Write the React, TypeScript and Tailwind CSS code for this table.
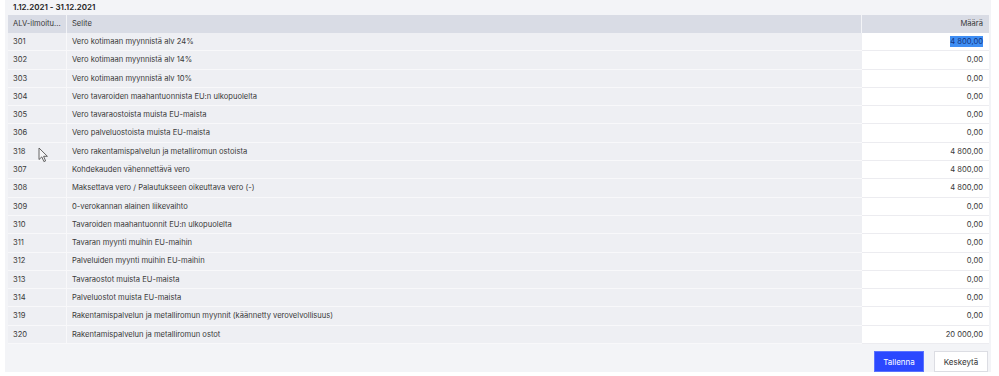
import { useEffect, useRef } from "react";

const rows: [string, string, string][] = [
  ["301", "Vero kotimaan myynnistä alv 24%", "4 800,00"],
  ["302", "Vero kotimaan myynnistä alv 14%", "0,00"],
  ["303", "Vero kotimaan myynnistä alv 10%", "0,00"],
  ["304", "Vero tavaroiden maahantuonnista EU:n ulkopuolelta", "0,00"],
  ["305", "Vero tavaraostoista muista EU-maista", "0,00"],
  ["306", "Vero palveluostoista muista EU-maista", "0,00"],
  ["318", "Vero rakentamispalvelun ja metalliromun ostoista", "4 800,00"],
  ["307", "Kohdekauden vähennettävä vero", "4 800,00"],
  ["308", "Maksettava vero / Palautukseen oikeuttava vero (-)", "4 800,00"],
  ["309", "0-verokannan alainen liikevaihto", "0,00"],
  ["310", "Tavaroiden maahantuonnit EU:n ulkopuolelta", "0,00"],
  ["311", "Tavaran myynti muihin EU-maihin", "0,00"],
  ["312", "Palveluiden myynti muihin EU-maihin", "0,00"],
  ["313", "Tavaraostot muista EU-maista", "0,00"],
  ["314", "Palveluostot muista EU-maista", "0,00"],
  ["319", "Rakentamispalvelun ja metalliromun myynnit (käännetty verovelvollisuus)", "0,00"],
  ["320", "Rakentamispalvelun ja metalliromun ostot", "20 000,00"],
];

function Cursor() {
  return (
    <svg className="absolute left-[38px] top-[147px]" width="12" height="16" viewBox="0 0 12 16">
      <path
        d="M1 1 L1 12.5 L3.8 9.9 L5.9 14.6 L7.6 13.9 L5.6 9.3 L9.4 9.3 Z"
        fill="#f4f4f6"
        stroke="#555"
        strokeWidth="0.9"
        strokeLinejoin="round"
      />
    </svg>
  );
}

export default function App() {
  const selRef = useRef<HTMLSpanElement>(null);

  useEffect(() => {
    // keep first amount "selected" as in the screenshot
    const el = selRef.current;
    if (!el) return;
    const range = document.createRange();
    range.selectNodeContents(el);
    const sel = window.getSelection();
    sel?.removeAllRanges();
    sel?.addRange(range);
  }, []);

  return (
    <div
      className="w-[999px] h-[376px] bg-white text-[#3a3a3a] relative"
      style={{ fontFamily: "Inter, 'Noto Sans', sans-serif" }}
    >
      <div className="ml-[5px] w-[986px] h-[372px] bg-[#f3f4f7] pl-[3px] pr-[2px] flex flex-col">
        {/* Title */}
        <div className="h-[15px] flex items-center pl-[5px] text-[8px] font-semibold text-[#222]">
          1.12.2021 - 31.12.2021
        </div>

        {/* Table */}
        <div className="flex flex-col text-[7.6px]">
          <div className="flex h-[18px] bg-[#d9dce5] text-[#3a3a3a]">
            <div className="w-[59px] flex items-center px-[5px] border-r border-[#f3f4f7] whitespace-nowrap">
              ALV-ilmoitu...
            </div>
            <div className="flex-1 flex items-center px-[5px] border-r border-[#f3f4f7]">Selite</div>
            <div className="w-[127px] flex items-center justify-end pr-[6px]">Määrä</div>
          </div>
          {rows.map(([code, label, amount], i) => (
            <div key={code} className="flex h-[18.3px]">
              <div className="w-[59px] flex items-center px-[5px] bg-[#eeeff3] border-r border-b border-[#f8f8fa]">
                {code}
              </div>
              <div className="flex-1 flex items-center px-[5px] bg-[#eeeff3] border-b border-[#f8f8fa] whitespace-nowrap">
                {label}
              </div>
              <div className="w-[127px] flex items-center justify-end pr-[6px] bg-white border-b border-[#ececf0]">
                {i === 0 ? (
                  <span ref={selRef} className="bg-[#3f8ef3] text-[#13357f] selection:bg-[#3f8ef3] selection:text-[#13357f]">
                    {amount}
                  </span>
                ) : (
                  amount
                )}
              </div>
            </div>
          ))}
        </div>

        {/* Buttons */}
        <div className="flex justify-end gap-[10px] pr-[1px] mt-[7px] text-[8px]">
          <button className="w-[50px] h-[21px] bg-[#2b48ff] text-white border border-[#5a73ff]">Tallenna</button>
          <button className="w-[54px] h-[21px] bg-white text-[#333] border border-[#dcdde3]">Keskeytä</button>
        </div>
      </div>
      <Cursor />
    </div>
  );
}
